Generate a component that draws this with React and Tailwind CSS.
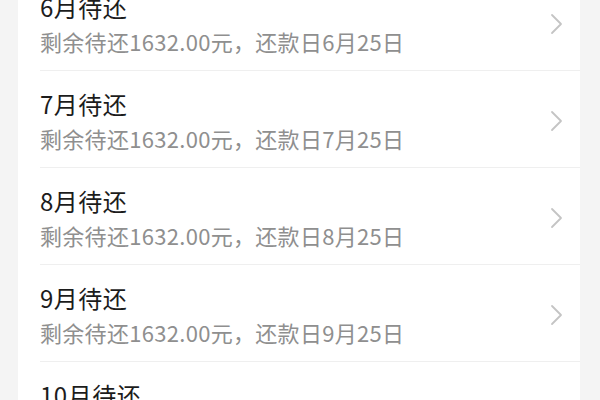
import React from 'react';

const months = [6, 7, 8, 9, 10];

function Chevron() {
  return (
    <svg width="14" height="22" viewBox="0 0 14 22" fill="none" className="shrink-0">
      <path d="M3 2l9 9-9 9" stroke="#c4c4c4" strokeWidth="1.8" strokeLinecap="round" strokeLinejoin="round" />
    </svg>
  );
}

function Row({ month }) {
  return (
    <div className="pl-[22px]">
      <div className="flex items-center border-b border-[#efefef] pt-[17px] pb-[14px] pr-[17px]">
        <div className="flex-1 min-w-0">
          <div className="text-[24px] leading-[32px] tracking-[0.5px] text-[#1c1c1c]">{month}月待还</div>
          <div className="mt-[3px] text-[22px] leading-[30px] tracking-[0.3px] text-[#8f8f8f] whitespace-nowrap">
            剩余待还1632.00元，还款日{month}月25日
          </div>
        </div>
        <Chevron />
      </div>
    </div>
  );
}

export default function App() {
  return (
    <div
      className="w-[600px] h-[400px] overflow-hidden bg-[#f4f4f4] pl-[18px] pr-[20px]"
      style={{ fontFamily: '"Noto Sans CJK SC", "Noto Sans", sans-serif' }}
    >
      <div className="-mt-[26px] bg-white">
        {months.map((m) => (
          <Row key={m} month={m} />
        ))}
      </div>
    </div>
  );
}
